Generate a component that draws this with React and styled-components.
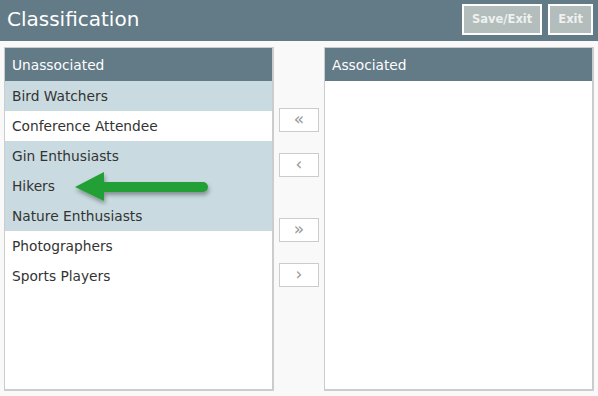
import React, { useState } from 'react';
import styled, { createGlobalStyle } from 'styled-components';

const GlobalStyle = createGlobalStyle`
  html, body {
    margin: 0;
    padding: 0;
    background: #f9f9f9;
    font-family: "DejaVu Sans", Verdana, sans-serif;
  }
`;

const Page = styled.div`
  width: 598px;
  height: 396px;
  background: #f9f9f9;
  display: flex;
  flex-direction: column;
  position: relative;
  overflow: hidden;
`;

const TopBar = styled.div`
  height: 41px;
  background: #637a87;
  display: flex;
  align-items: center;
  justify-content: space-between;
  padding: 0 5px 0 7px;
  box-sizing: border-box;
`;

const Title = styled.h1`
  margin: 0;
  color: #fff;
  font-size: 20px;
  font-weight: normal;
  margin-top: -4px;
`;

const Actions = styled.div`
  display: flex;
  gap: 6px;
  margin-top: -3px;
`;

const ActionButton = styled.button`
  height: 31px;
  padding: 0 8px;
  background: #b3bdbb;
  border: 2px solid #fff;
  color: #eef1f0;
  font-family: inherit;
  font-size: 11.5px;
  font-weight: bold;
`;

const Body = styled.div`
  flex: 1;
  display: flex;
  padding: 6px 4px 5px 4px;
`;

const Panel = styled.div`
  width: 270px;
  display: flex;
  flex-direction: column;
  background: #fff;
  border: 1px solid #ccc;
  border-right-width: 2px;
  border-bottom-width: 2px;
  box-sizing: border-box;
`;

const PanelHeader = styled.div`
  height: 33px;
  background: #637a87;
  color: #fff;
  font-size: 13.75px;
  display: flex;
  align-items: center;
  padding-left: 7px;
`;

const List = styled.ul`
  list-style: none;
  margin: 0;
  padding: 0;
`;

const Item = styled.li`
  height: 30px;
  display: flex;
  align-items: center;
  padding-left: 7px;
  font-size: 13.75px;
  color: #333;
  background: ${p => (p.$selected ? '#c9dbe0' : '#fff')};
`;

const Mover = styled.div`
  width: 50px;
  display: flex;
  flex-direction: column;
  align-items: center;
  padding-top: 61px;
`;

const MoveButton = styled.button`
  width: 40px;
  height: 24px;
  padding: 0 0 2px;
  background: #fff;
  border: 1px solid #ccc;
  color: #999;
  font-family: inherit;
  font-size: 17px;
  line-height: 1;
  margin-bottom: ${p => p.$gap}px;
`;

const Pointer = styled.svg`
  position: absolute;
  left: 70px;
  top: 166px;
  width: 148px;
  height: 40px;
`;

const items = [
  { name: 'Bird Watchers', selected: true },
  { name: 'Conference Attendee', selected: false },
  { name: 'Gin Enthusiasts', selected: true },
  { name: 'Hikers', selected: true },
  { name: 'Nature Enthusiasts', selected: true },
  { name: 'Photographers', selected: false },
  { name: 'Sports Players', selected: false },
];

export default function App() {
  const [list] = useState(items);

  return (
    <Page>
      <GlobalStyle />
      <TopBar>
        <Title>Classification</Title>
        <Actions>
          <ActionButton>Save/Exit</ActionButton>
          <ActionButton>Exit</ActionButton>
        </Actions>
      </TopBar>
      <Body>
        <Panel>
          <PanelHeader>Unassociated</PanelHeader>
          <List>
            {list.map(i => (
              <Item key={i.name} $selected={i.selected}>{i.name}</Item>
            ))}
          </List>
        </Panel>
        <Mover>
          <MoveButton $gap={21}>«</MoveButton>
          <MoveButton $gap={41}>‹</MoveButton>
          <MoveButton $gap={21}>»</MoveButton>
          <MoveButton $gap={0}>›</MoveButton>
        </Mover>
        <Panel>
          <PanelHeader>Associated</PanelHeader>
        </Panel>
      </Body>
      <Pointer viewBox="0 0 148 40">
        <defs>
          <filter id="sh" x="-20%" y="-50%" width="140%" height="200%">
            <feDropShadow dx="1" dy="3" stdDeviation="2" floodColor="#000" floodOpacity="0.35" />
          </filter>
        </defs>
        <g filter="url(#sh)">
          <path d="M5 21 L34 6 L34 35 Z" fill="#22a035" />
          <line x1="32" y1="21" x2="133" y2="21" stroke="#22a035" strokeWidth="10" strokeLinecap="round" />
        </g>
      </Pointer>
    </Page>
  );
}
